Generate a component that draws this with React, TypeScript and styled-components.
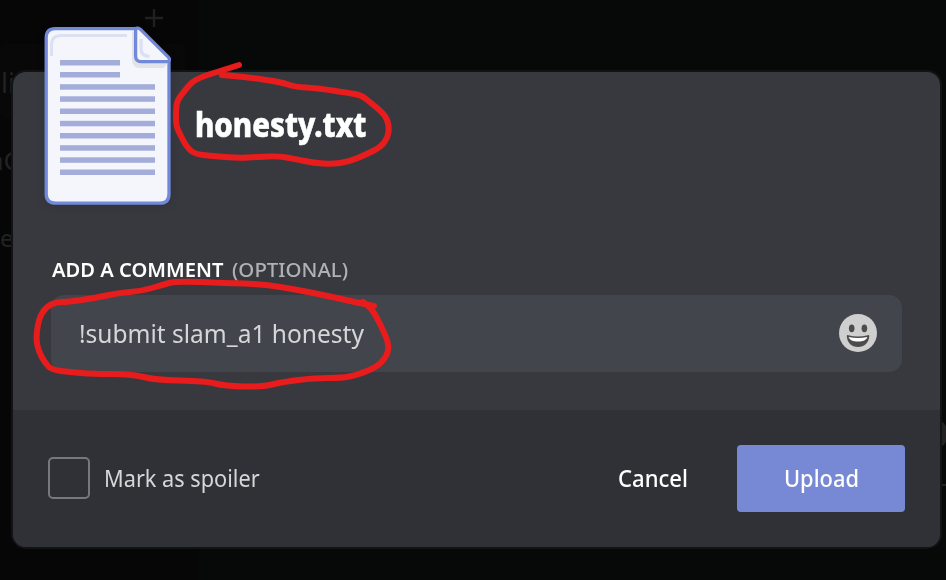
import React from "react";
import styled, { createGlobalStyle } from "styled-components";

const GlobalStyle = createGlobalStyle`
  * { box-sizing: border-box; }
  body { margin: 0; background: #060908; overflow: hidden; font-family: "Noto Sans", sans-serif; }
`;

const Screen = styled.main`
  position: relative;
  width: 946px;
  height: 580px;
  padding: 72px 6px 33px 13px;
  overflow: hidden;
  background: linear-gradient(90deg, #060606 199px, #060908 199px);
`;

const Ghost = styled.span<{ $x: number; $y: number; $size: number }>`
  position: absolute;
  left: ${(p) => p.$x}px;
  top: ${(p) => p.$y}px;
  font-size: ${(p) => p.$size}px;
  line-height: 30px;
  color: #222223;
`;

const GhostPlus = styled.svg`
  position: absolute;
  left: 144px;
  top: 8px;
`;

const GhostRow = styled.div`
  position: absolute;
  left: 0;
  top: 44px;
  width: 185px;
  height: 74px;
  border-radius: 6px;
  background: #080808;
`;

const Modal = styled.section`
  position: relative;
  display: flex;
  flex-direction: column;
  height: 475px;
  border-radius: 13px;
  background: #38393e;
  box-shadow: 0 0 0 2px #121315;
`;

const Body = styled.div`
  height: 338px;
  padding: 0 38px;
`;

const FileHeader = styled.header`
  display: flex;
  align-items: flex-start;
  height: 186px;
  margin-left: -8px;
`;

const FileIcon = styled.svg`
  flex: none;
  width: 130px;
  height: 182px;
  margin-top: -47px;
  filter: drop-shadow(0 2px 4px rgba(0, 0, 0, 0.12));
`;

const Squeeze = styled.span<{ $scale: number }>`
  display: inline-block;
  white-space: pre;
  transform: scaleX(${(p) => p.$scale});
  transform-origin: 0 50%;
`;

const FileName = styled.h1`
  margin: 29px 0 0 22px;
  font-size: 33px;
  line-height: 48px;
  font-weight: 800;
  color: #fff;
  -webkit-text-stroke: 0.6px #fff;
`;

const Label = styled.div`
  display: flex;
  height: 37px;
  padding-left: 1px;
  font-size: 19px;
  line-height: 25px;
  font-weight: 600;
  color: #fff;
`;

const LabelText = styled.span`
  width: 180px;
`;

const Optional = styled.span`
  font-weight: 500;
  color: #b0b1b4;
`;

const CommentField = styled.div`
  display: flex;
  align-items: center;
  justify-content: space-between;
  height: 77px;
  padding: 0 24px 2px 28px;
  border-radius: 13px;
  background: #42454c;
  font-size: 26px;
  line-height: 36px;
  color: #d5d6d8;
`;

const Footer = styled.footer`
  display: flex;
  align-items: center;
  height: 137px;
  padding: 0 35px;
  border-radius: 0 0 13px 13px;
  background: #303136;
`;

const Checkbox = styled.span`
  width: 42px;
  height: 42px;
  margin-bottom: 1px;
  border: 2px solid #77787d;
  border-radius: 5px;
`;

const SpoilerText = styled.span`
  flex: 1;
  margin: 0 0 2px 14px;
  font-size: 24px;
  line-height: 34px;
  color: #d6d7d9;
`;

const Action = styled.button<{ $primary?: boolean }>`
  width: 168px;
  height: 67px;
  padding: 0 0 2px ${(p) => (p.$primary ? 47 : 49)}px;
  border: 0;
  border-radius: 4px;
  background: ${(p) => (p.$primary ? "#7789d4" : "transparent")};
  font: 500 24px/34px "Noto Sans", sans-serif;
  text-align: left;
  color: #fff;
`;

const Marks = styled.svg`
  position: absolute;
  left: 0;
  top: 0;
  pointer-events: none;
`;

type Point = [number, number];

const titleMark: Point[] = [
  [239, 65], [220, 71], [195, 79], [185, 90], [177, 101], [176, 110], [176, 126], [181, 136],
  [186, 146], [194, 154], [212, 156], [238, 158], [258, 157], [278, 156], [295, 159], [314, 163],
  [332, 164], [348, 162], [365, 155], [381, 147], [388, 137], [389, 127], [387, 119], [382, 112],
  [371, 103], [361, 95], [349, 93], [316, 88], [295, 87], [281, 82], [245, 77], [222, 75],
];

const commentMark: Point[] = [
  [374, 306], [364, 304], [305, 291], [262, 284], [225, 283], [176, 281], [162, 285], [142, 291],
  [118, 293], [95, 298], [68, 302], [56, 302], [46, 307], [39, 318], [36, 337], [38, 350],
  [45, 363], [52, 370], [70, 372], [92, 374], [132, 374], [155, 380], [205, 381], [225, 386],
  [262, 387], [282, 382], [315, 378], [342, 378], [357, 375], [377, 367], [387, 356], [389, 345],
  [384, 332], [376, 316], [370, 307], [363, 302],
];

function smooth(points: Point[]) {
  let d = `M${points[0].join(" ")}`;
  for (let i = 1; i < points.length - 1; i++) {
    const [x, y] = points[i];
    const [nx, ny] = points[i + 1];
    d += ` Q${x} ${y} ${(x + nx) / 2} ${(y + ny) / 2}`;
  }
  return `${d} L${points[points.length - 1].join(" ")}`;
}

const lines = [60, 72, 84.2, 96.3, 108.5, 120.8, 133, 145.2, 157.3, 169.5];

function DocumentIcon() {
  return (
    <FileIcon viewBox="43 25 130 182">
      <path d="M55 28.7H138L169 59V194Q169 203.2 160 203.2H56Q46.2 203.2 46.2 194V38Q46.2 28.7 55 28.7Z" fill="#f4f6fc" stroke="#7289da" strokeWidth="3.3" />
      <path d="M51.5 56V45Q51.5 35.5 61 35.5H127" fill="none" stroke="#dce0f3" strokeWidth="3" />
      <path d="M132 31V59Q132 68 140 68H164L167.5 63Z" fill="#e1e3e8" />
      <path d="M135.6 28.7V56Q135.6 61.6 141 61.6H167C170 61.6 170 58.6 168 56.8L141 29.8C138 27.3 135.6 28 135.6 30Z" fill="#f4f6fc" stroke="#7289da" strokeWidth="3.3" strokeLinejoin="round" />
      <path d="M141 39V49Q141 56.3 149.5 56.3" fill="none" stroke="#dce0f3" strokeWidth="3.3" />
      {lines.map((y, i) => (
        <rect key={y} x="60" y={y} width={i < 2 ? 60 : 95} height="5.5" fill="#a4add9" />
      ))}
    </FileIcon>
  );
}

function EmojiIcon() {
  return (
    <svg width="40" height="40" viewBox="0 0 40 40">
      <circle cx="20" cy="20" r="19" fill="#cfcfcf" />
      <ellipse cx="13.7" cy="15.3" rx="2.8" ry="3.9" fill="#4b4c4b" />
      <ellipse cx="26.4" cy="15.3" rx="2.8" ry="3.9" fill="#4b4c4b" />
      <path d="M8.8 23Q8.8 21.8 10.3 22.2Q20 24.7 29.7 22.2Q31.3 21.8 31.3 23C31 29.5 26.5 34 20 34S9 29.5 8.8 23Z" fill="#4b4c4b" />
      <path d="M10.6 24Q20 26.2 29.4 24C28.5 27.2 25 28.5 20 28.5S11.5 27.2 10.6 24Z" fill="#fff" />
    </svg>
  );
}

export default function App() {
  return (
    <>
      <GlobalStyle />
      <Screen>
        <GhostRow />
        <GhostPlus width="20" height="20">
          <path d="M10 1V19M1 10H19" stroke="#202020" strokeWidth="2.4" />
        </GhostPlus>
        <Ghost $x={1} $y={68} $size={27}>li</Ghost>
        <Ghost $x={-11} $y={145} $size={26}>aC</Ghost>
        <Ghost $x={0} $y={223} $size={24}>e</Ghost>
        <Marks width="946" height="580">
          <path d="M938 422Q946 422 946 434T938 446ZM940 485H946" fill="#222223" stroke="#222223" strokeWidth="2" />
        </Marks>
        <Modal>
          <Body>
            <FileHeader>
              <DocumentIcon />
              <FileName><Squeeze $scale={0.89}>honesty.txt</Squeeze></FileName>
            </FileHeader>
            <Label>
              <LabelText><Squeeze $scale={1.06}>ADD A COMMENT</Squeeze></LabelText>
              <Optional><Squeeze $scale={1.075}>(OPTIONAL)</Squeeze></Optional>
            </Label>
            <CommentField>
              <Squeeze $scale={0.943}>!submit slam_a1 honesty</Squeeze>
              <EmojiIcon />
            </CommentField>
          </Body>
          <Footer>
            <Checkbox />
            <SpoilerText><Squeeze $scale={0.905}>Mark as spoiler</Squeeze></SpoilerText>
            <Action><Squeeze $scale={0.92}>Cancel</Squeeze></Action>
            <Action $primary><Squeeze $scale={0.91}>Upload</Squeeze></Action>
          </Footer>
        </Modal>
        <Marks width="946" height="580">
          {[titleMark, commentMark].map((mark, i) => (
            <path key={i} d={smooth(mark)} fill="none" stroke="#e81c1c" strokeWidth="6" strokeLinecap="round" strokeLinejoin="round" />
          ))}
        </Marks>
      </Screen>
    </>
  );
}
